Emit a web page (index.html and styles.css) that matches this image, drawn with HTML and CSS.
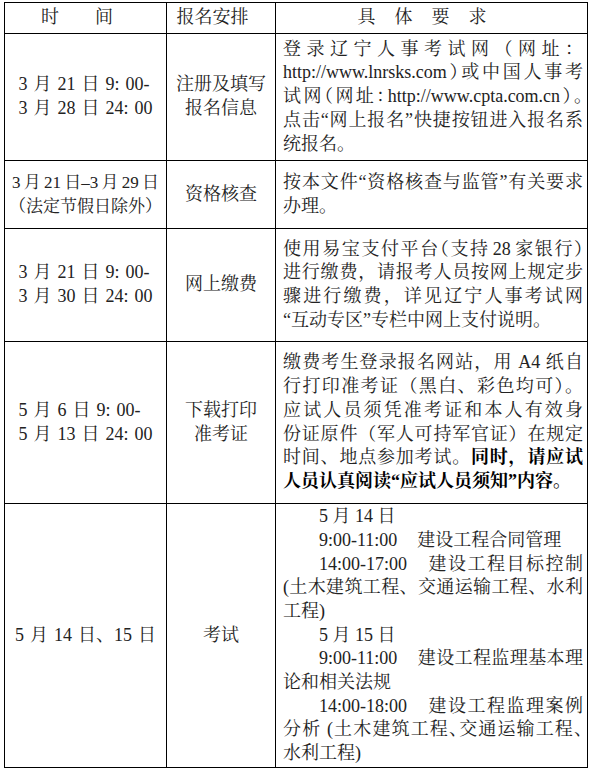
FILE: index.html
```html
<!DOCTYPE html>
<html lang="zh-CN">
<head>
<meta charset="utf-8">
<title>报名安排</title>
<link rel="stylesheet" href="styles.css">
</head>
<body>
<div class="page">
<table class="sched">
<colgroup><col class="c1"><col class="c2"><col class="c3"></colgroup>
<tr class="hd">
<th class="h1">时　　间</th>
<th class="h2">报名安排</th>
<th class="h3">具体要求</th>
</tr>
<tr class="r1">
<td class="t"><div class="tb"><span class="ln">3 月 21 日 9: 00-</span><span class="ln">3 月 28 日 24: 00</span></div></td>
<td class="m"><span class="ln">注册及填写</span><span class="ln">报名信息</span></td>
<td class="d">
<span class="ln j">登录辽宁人事考试网（网址：</span>
<span class="ln j">http://www.lnrsks.com<span class="h">）</span>或中国人事考</span>
<span class="ln j">试网<span class="h">（</span>网址<span class="h">：</span>http://www.cpta.com.cn<span class="h">）。</span></span>
<span class="ln j">点击“网上报名”快捷按钮进入报名系</span>
<span class="ln">统报名。</span>
</td>
</tr>
<tr class="r2">
<td class="t small"><span class="ln tight">3 月 21 日–3 月 29 日</span><span class="ln">（法定节假日除外）</span></td>
<td class="m"><span class="ln">资格核查</span></td>
<td class="d">
<span class="ln j">按本文件“资格核查与监管”有关要求</span>
<span class="ln">办理。</span>
</td>
</tr>
<tr class="r3">
<td class="t"><div class="tb"><span class="ln">3 月 21 日 9: 00-</span><span class="ln">3 月 30 日 24: 00</span></div></td>
<td class="m"><span class="ln">网上缴费</span></td>
<td class="d">
<span class="ln j">使用易宝支付平台<span class="h">（</span>支持<span class="num">28</span>家银行<span class="h">）</span></span>
<span class="ln j">进行缴费，请报考人员按网上规定步</span>
<span class="ln j">骤进行缴费，详见辽宁人事考试网</span>
<span class="ln">“互动专区”专栏中网上支付说明。</span>
</td>
</tr>
<tr class="r4">
<td class="t"><div class="tb"><span class="ln">5 月 6 日 9: 00-</span><span class="ln">5 月 13 日 24: 00</span></div></td>
<td class="m"><span class="ln">下载打印</span><span class="ln">准考证</span></td>
<td class="d">
<span class="ln j">缴费考生登录报名网站，用 A4 纸自</span>
<span class="ln j">行打印准考证（黑白、彩色均可）。</span>
<span class="ln j">应试人员须凭准考证和本人有效身</span>
<span class="ln j">份证原件（军人可持军官证）在规定</span>
<span class="ln j">时间、地点参加考试。<b class="em">同时，请应试</b></span>
<span class="ln"><b class="em">人员认真阅读“应试人员须知”内容。</b></span>
</td>
</tr>
<tr class="r5">
<td class="t"><span class="ln">5 月 14 日、15 日</span></td>
<td class="m"><span class="ln">考试</span></td>
<td class="d">
<span class="ln ind">5 月 14 日</span>
<span class="ln ind">9:00-11:00<span class="gap"></span>建设工程合同管理</span>
<span class="ln ind j">14:00-17:00<span class="gap"></span>建设工程目标控制</span>
<span class="ln j">(土木建筑工程、交通运输工程、水利</span>
<span class="ln">工程)</span>
<span class="ln ind">5 月 15 日</span>
<span class="ln ind j">9:00-11:00<span class="gap"></span>建设工程监理基本理</span>
<span class="ln">论和相关法规</span>
<span class="ln ind j">14:00-18:00<span class="gap"></span>建设工程监理案例</span>
<span class="ln j">分析 (土木建筑工程<span class="h">、</span>交通运输工程<span class="h">、</span></span>
<span class="ln">水利工程)</span>
</td>
</tr>
</table>
</div>
</body>
</html>
```
FILE: styles.css
```css
* { box-sizing: border-box; }

body {
  margin: 0;
  background: #fff;
  color: #222;
  font-family: "Liberation Serif", "Noto Serif CJK SC", "Noto Sans CJK SC", serif;
  font-size: 18px;
}

.page {
  padding: 2px 0 0 4px;
}

.sched {
  border-collapse: collapse;
  table-layout: fixed;
  width: 583px;
}

.sched th,
.sched td {
  border: 1px solid #000;
  padding: 0;
  vertical-align: middle;
  line-height: 23.7px;
  font-weight: 400;
  overflow: hidden;
}

.c1 { width: 162px; }
.c2 { width: 109px; }
.c3 { width: 312px; }

.hd { height: 31px; }
.r1 { height: 127px; }
.r2 { height: 68px; }
.r3 { height: 113px; }
.r4 { height: 162px; }
.r5 { height: 264px; }

.sched th {
  text-align: center;
  padding-right: 17px;
}

.sched th.h3 {
  letter-spacing: 19px;
  padding-right: 0;
}

.sched td.t,
.sched td.m {
  text-align: center;
}

.sched td.t {
  word-spacing: 1.5px;
}

.sched td.small {
  font-size: 17px;
  line-height: 24px;
}

.sched td.t .tight {
  word-spacing: -1px;
  white-space: nowrap;
}

.tb {
  display: inline-block;
  text-align: left;
}

.ln {
  display: block;
}

.sched td.d {
  padding: 0 4px 0 7px;
  text-align: left;
}

.j {
  text-align: justify;
  text-align-last: justify;
}

.h {
  font-feature-settings: "halt";
}

.num {
  margin: 0 3px;
}

.ind {
  text-indent: 2em;
}

.gap {
  display: inline-block;
  width: 20px;
}

.em {
  font-weight: 700;
  color: #000;
}
```
